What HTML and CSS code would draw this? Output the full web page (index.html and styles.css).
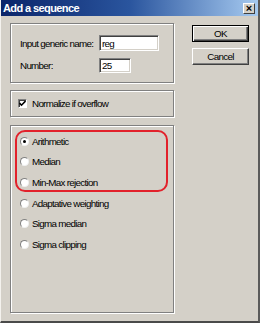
FILE: index.html
```html
<!DOCTYPE html>
<html lang="en">
<head>
    <meta charset="UTF-8">
    <meta name="viewport" content="width=device-width, initial-scale=1.0">
    <title>Add a sequence</title>
    <link rel="stylesheet" href="styles.css">
</head>
<body>
    <div class="window">
        <div class="titlebar">
            <span class="title">Add a sequence</span>
            <span class="close">×</span>
        </div>

        <div class="content">
            <div class="left">
                <div class="group group-name">
                    <div class="field">
                        <label for="gname">Input generic name:</label>
                        <input type="text" id="gname" class="text-input wide" value="reg">
                    </div>
                    <div class="field">
                        <label for="count">Number:</label>
                        <input type="text" id="count" class="text-input short" value="25">
                    </div>
                </div>

                <div class="group group-norm">
                    <span class="checkbox">
                        <svg width="7" height="7" viewBox="0 0 7 7"><path d="M0.5 3 L2.5 5.2 L6.5 1" fill="none" stroke="#000" stroke-width="1.6"/></svg>
                    </span>
                    <span>Normalize if overflow</span>
                </div>

                <div class="group group-method">
                    <div class="radio-row"><span class="radio checked"></span>Arithmetic</div>
                    <div class="radio-row"><span class="radio"></span>Median</div>
                    <div class="radio-row"><span class="radio"></span>Min-Max rejection</div>
                    <div class="radio-row"><span class="radio"></span>Adaptative weighting</div>
                    <div class="radio-row"><span class="radio"></span>Sigma median</div>
                    <div class="radio-row"><span class="radio"></span>Sigma clipping</div>
                    <div class="highlight"></div>
                </div>
            </div>

            <div class="buttons">
                <button class="btn default">OK</button>
                <button class="btn">Cancel</button>
            </div>
        </div>
    </div>
</body>
</html>
```

FILE: styles.css
```css
body {
    margin: 0;
    background: #d4d0c8;
    font-family: "Liberation Sans", Arial, sans-serif;
    font-size: 9.8px;
    letter-spacing: -0.7px;
    color: #000;
}
.window {
    width: 260px;
    height: 323px;
    box-sizing: border-box;
    background: #d4d0c8;
    border-left: 1px solid #f4f2ee;
    border-right: 2px solid #5a5a5a;
    border-bottom: 2px solid #4a4a4a;
}
.titlebar {
    height: 16px;
    display: flex;
    align-items: center;
    justify-content: space-between;
    padding: 0 3px 0 2px;
    background: linear-gradient(to right, #0a246a, #2a559e 50%, #a6caf0);
}
.title {
    color: #fff;
    font-weight: bold;
    font-size: 11px;
    letter-spacing: -0.6px;
}
.close {
    width: 12px;
    height: 11px;
    box-sizing: border-box;
    background: #d4d0c8;
    border: 1px solid;
    border-color: #fff #404040 #404040 #fff;
    font-weight: bold;
    font-size: 11px;
    letter-spacing: 0;
    line-height: 8px;
    text-align: center;
}
.content {
    display: flex;
    gap: 18px;
    padding: 7px 0 0 9px;
}
.left {
    width: 164px;
    display: flex;
    flex-direction: column;
}
.group {
    box-sizing: border-box;
    border: 1px solid #808080;
    box-shadow: inset 1px 1px 0 #fff, 1px 1px 0 #fff;
    white-space: nowrap;
}
.group-name {
    height: 60px;
    padding: 11px 0 0 9px;
    display: flex;
    flex-direction: column;
    gap: 7px;
}
.field {
    display: flex;
    align-items: center;
}
.field label {
    width: 79px;
}
.text-input {
    box-sizing: border-box;
    height: 16px;
    padding: 0 2px;
    border: 1px solid;
    border-color: #808080 #fff #fff #808080;
    box-shadow: inset 1px 1px 0 #404040, inset -1px -1px 0 #d4d0c8;
    background: #fff;
    font-family: inherit;
    font-size: 9.8px;
    letter-spacing: -0.7px;
}
.wide {
    width: 60px;
}
.short {
    width: 32px;
    height: 15px;
}
.group-norm {
    height: 27px;
    margin-top: 7px;
    padding-left: 7px;
    display: flex;
    align-items: center;
    gap: 5px;
}
.checkbox {
    width: 9px;
    height: 9px;
    box-sizing: border-box;
    display: flex;
    align-items: center;
    justify-content: center;
    background: #fff;
    border: 1px solid;
    border-color: #808080 #fff #fff #808080;
    box-shadow: inset 1px 1px 0 #404040;
}
.group-method {
    position: relative;
    height: 188px;
    margin-top: 8px;
    padding: 5px 0 0 9px;
}
.radio-row {
    height: 20.6px;
    display: flex;
    align-items: center;
    gap: 3px;
}
.radio {
    width: 9px;
    height: 9px;
    box-sizing: border-box;
    border-radius: 50%;
    background: #fff;
    border: 1px solid;
    border-color: #808080 #f0f0f0 #f0f0f0 #808080;
    display: flex;
    align-items: center;
    justify-content: center;
}
.radio.checked::after {
    content: "";
    width: 3px;
    height: 3px;
    border-radius: 50%;
    background: #000;
}
.highlight {
    position: absolute;
    left: 4px;
    top: 4px;
    width: 153px;
    height: 62px;
    box-sizing: border-box;
    border: 2px solid #e2212b;
    border-radius: 10px;
}
.buttons {
    display: flex;
    flex-direction: column;
    gap: 6px;
    margin-top: 2px;
}
.btn {
    width: 57px;
    height: 17px;
    box-sizing: border-box;
    padding: 0;
    background: #d4d0c8;
    border: 1px solid;
    border-color: #fff #404040 #404040 #fff;
    box-shadow: inset -1px -1px 0 #808080;
    font-family: inherit;
    font-size: 9.8px;
    letter-spacing: -0.7px;
    color: #000;
}
.btn.default {
    border: 1px solid #000;
    box-shadow: inset 1px 1px 0 #fff, inset -1px -1px 0 #404040, inset -2px -2px 0 #808080;
}
```
